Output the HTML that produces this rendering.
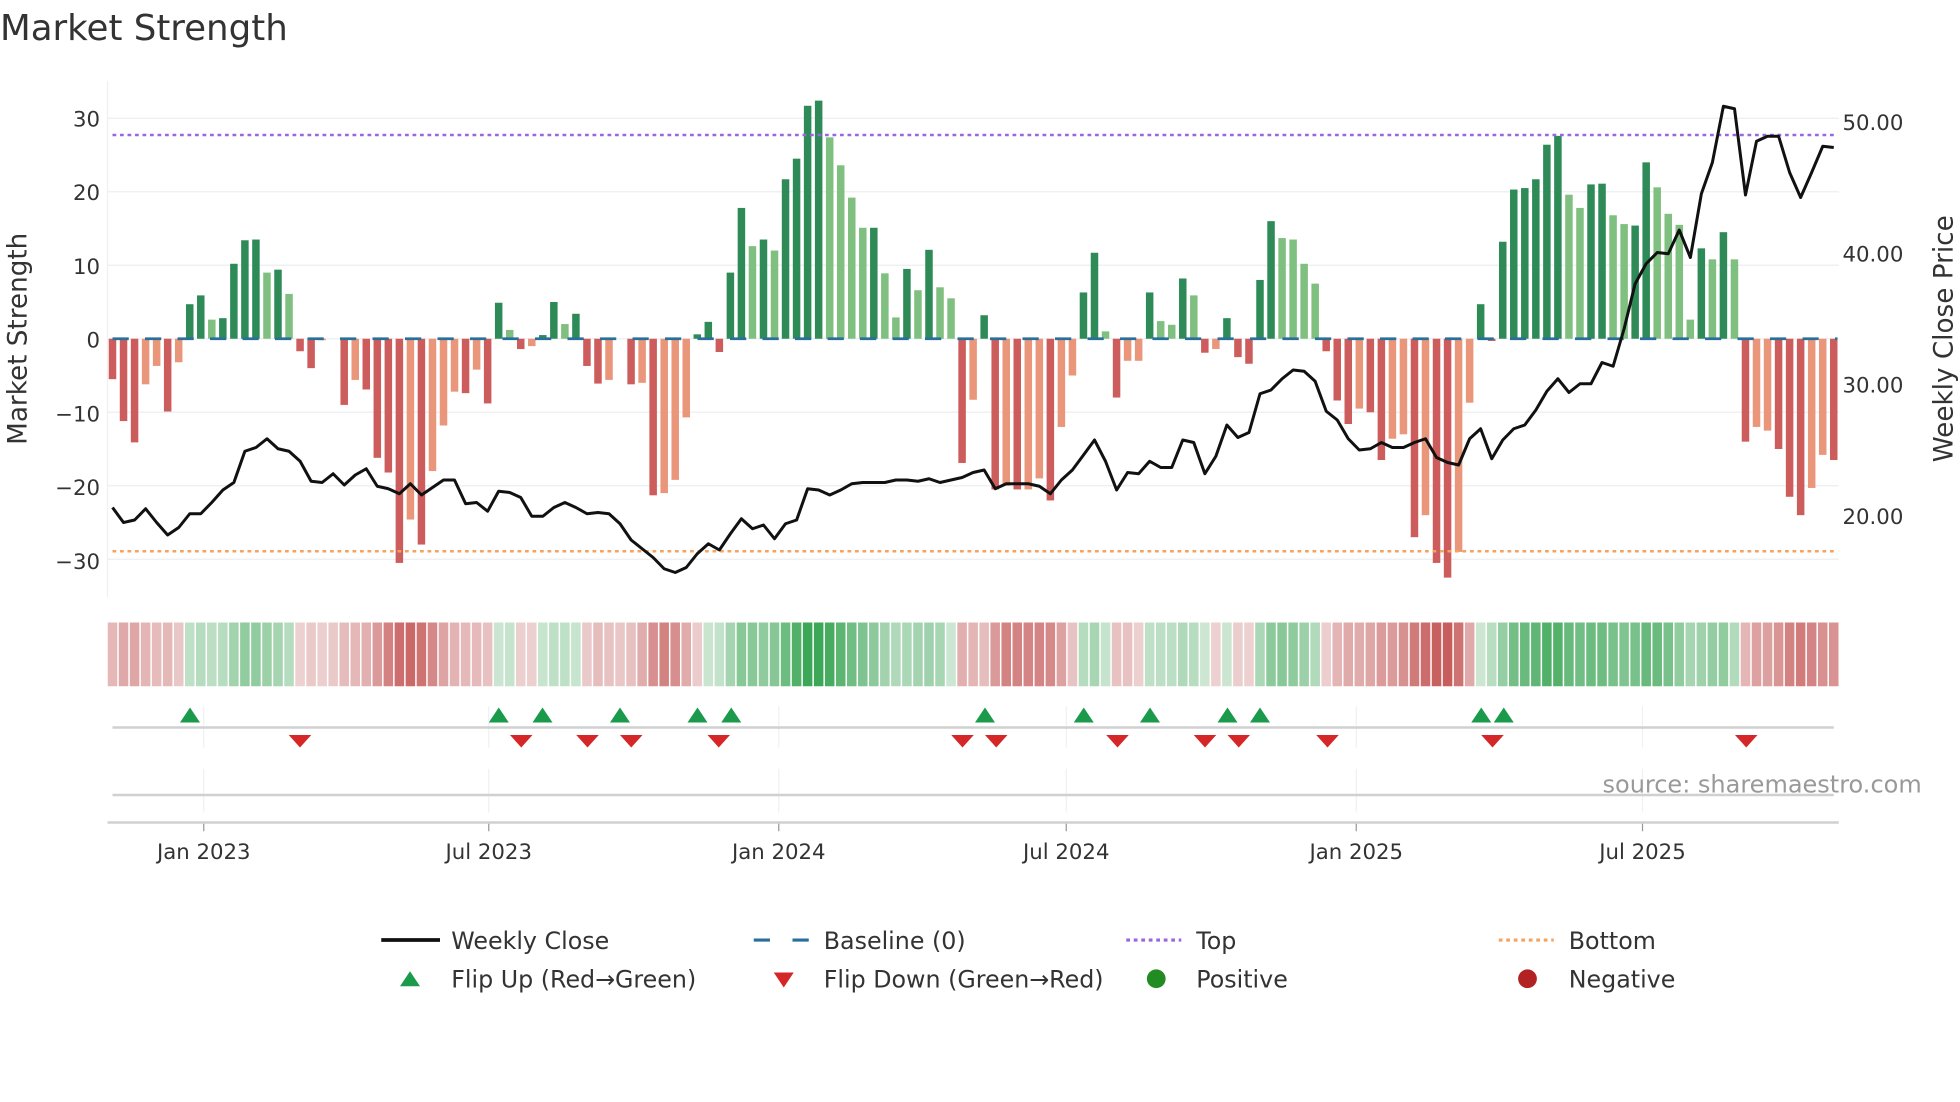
<!DOCTYPE html>
<html><head><meta charset="utf-8"><style>
html,body{margin:0;padding:0;background:#fff;width:1960px;height:1102px;overflow:hidden}
svg text{font-family:"DejaVu Sans","Liberation Sans",sans-serif}
</style></head><body>
<svg id="s" width="1960" height="1102" viewBox="0 0 1568 881.6" xmlns="http://www.w3.org/2000/svg">
<rect width="1568" height="881.6" fill="#fff"/>
<text x="0" y="32" font-size="28.5" fill="#333">Market Strength</text>
<g id="grid"></g>
<line x1="86" y1="65" x2="86" y2="478" stroke="#eef0f4" stroke-width="1"/>
<g id="bars"></g>
<line x1="90" y1="108" x2="1470" y2="108" stroke="#9966dd" stroke-width="2" stroke-dasharray="3,3"/>
<line x1="90" y1="441" x2="1470" y2="441" stroke="#f4a460" stroke-width="2" stroke-dasharray="3,3"/>
<polyline id="price" fill="none" stroke="#111" stroke-width="2.4" stroke-linejoin="round"/>
<text transform="translate(21,271) rotate(-90)" text-anchor="middle" font-size="21" fill="#333">Market Strength</text>
<text transform="translate(1562,271) rotate(-90)" text-anchor="middle" font-size="21" fill="#333">Weekly Close Price</text>
<g font-size="17" fill="#333" text-anchor="end">
<text x="80" y="101">30</text><text x="80" y="160">20</text><text x="80" y="219">10</text><text x="80" y="278">0</text>
<text x="80" y="337">−10</text><text x="80" y="396">−20</text><text x="80" y="455">−30</text>
</g>
<g font-size="17" fill="#333">
<text x="1474" y="104">50.00</text><text x="1474" y="209">40.00</text><text x="1474" y="314">30.00</text><text x="1474" y="419">20.00</text>
</g>
<g id="heat"></g>
<g stroke="#eef0f4" stroke-width="1">
<line x1="163" y1="565" x2="163" y2="598"/><line x1="391" y1="565" x2="391" y2="598"/><line x1="623" y1="565" x2="623" y2="598"/><line x1="853" y1="565" x2="853" y2="598"/><line x1="1085" y1="565" x2="1085" y2="598"/><line x1="1314" y1="565" x2="1314" y2="598"/>
<line x1="163" y1="615" x2="163" y2="650"/><line x1="391" y1="615" x2="391" y2="650"/><line x1="623" y1="615" x2="623" y2="650"/><line x1="853" y1="615" x2="853" y2="650"/><line x1="1085" y1="615" x2="1085" y2="650"/><line x1="1314" y1="615" x2="1314" y2="650"/>
</g>
<line x1="90" y1="582" x2="1467" y2="582" stroke="#d0d0d0" stroke-width="2"/>
<line x1="90" y1="636" x2="1467" y2="636" stroke="#d0d0d0" stroke-width="2"/>
<line x1="86" y1="658" x2="1471" y2="658" stroke="#d0d0d0" stroke-width="2"/>
<g id="flips"></g>
<text x="1282" y="634" font-size="19.2" fill="#999">source: sharemaestro.com</text>
<g stroke="#999" stroke-width="1">
<line x1="163" y1="659" x2="163" y2="665"/><line x1="391" y1="659" x2="391" y2="665"/><line x1="623" y1="659" x2="623" y2="665"/><line x1="853" y1="659" x2="853" y2="665"/><line x1="1085" y1="659" x2="1085" y2="665"/><line x1="1314" y1="659" x2="1314" y2="665"/>
</g>
<g font-size="17" fill="#333" text-anchor="middle">
<text x="163" y="687">Jan 2023</text><text x="391" y="687">Jul 2023</text><text x="623" y="687">Jan 2024</text><text x="853" y="687">Jul 2024</text><text x="1085" y="687">Jan 2025</text><text x="1314" y="687">Jul 2025</text>
</g>
<g font-size="19" fill="#333">
<line x1="305" y1="752" x2="352" y2="752" stroke="#111" stroke-width="3"/><text x="361" y="759">Weekly Close</text>
<line x1="603" y1="752" x2="647" y2="752" stroke="#2a6f9a" stroke-width="2.5" stroke-dasharray="13,18"/><text x="659" y="759">Baseline (0)</text>
<line x1="901" y1="752" x2="945" y2="752" stroke="#9966dd" stroke-width="2.5" stroke-dasharray="3,3"/><text x="957" y="759">Top</text>
<line x1="1199" y1="752" x2="1243" y2="752" stroke="#f4a460" stroke-width="2.5" stroke-dasharray="3,3"/><text x="1255" y="759">Bottom</text>
<polygon points="320,789 328,777 336,789" fill="#1a9a4a"/><text x="361" y="790">Flip Up (Red→Green)</text>
<polygon points="619,778 635,778 627,790" fill="#d62728"/><text x="659" y="790">Flip Down (Green→Red)</text>
<circle cx="925" cy="783" r="7.5" fill="#228b22"/><text x="957" y="790">Positive</text>
<circle cx="1222" cy="783" r="7.5" fill="#b22222"/><text x="1255" y="790">Negative</text>
</g>
</svg>
<script>
(function(){
var NS="http://www.w3.org/2000/svg";
function el(p,t,a){var e=document.createElementNS(NS,t);for(var k in a)e.setAttribute(k,a[k]);p.appendChild(e);return e;}
var B="-5.5R -11.2R -14.1R -6.2S -3.7S -9.9R -3.2S 4.7D 5.9D 2.6L 2.8D 10.2D 13.4D 13.5D 9L 9.4D 6.1L -1.7R -4R -0.2S 0Z -9R -5.6S -6.9R -16.2R -18.2R -30.5R -24.6S -28R -18S -11.8S -7.2S -7.4R -4.2S -8.8R 4.9D 1.2L -1.4R -1S 0.5D 5D 2L 3.4D -3.7R -6.1R -5.6S 0Z -6.2R -6S -21.3R -21S -19.2S -10.7S 0.6D 2.3D -1.8R 9D 17.8D 12.6L 13.5D 12L 21.7D 24.5D 31.7D 32.4D 27.4L 23.6L 19.2L 15.1L 15.1D 8.9L 2.9L 9.5D 6.6L 12.1D 7L 5.5L -16.9R -8.3S 3.2D -20.5R -20S -20.5R -20.5S -19S -22R -12S -5S 6.3D 11.7D 1L -8R -3S -3S 6.3D 2.4L 1.9L 8.2D 5.9L -1.9R -1.4S 2.8D -2.5R -3.4R 8D 16D 13.7L 13.5L 10.2L 7.5L -1.7R -8.4R -11.6R -9.5S -10R -16.5R -13.6S -13S -27R -24S -30.5R -32.5R -29S -8.7S 4.7D -0.3R 13.2D 20.3D 20.5D 21.7D 26.4D 27.6D 19.6L 17.8L 21D 21.1D 16.8L 15.6L 15.4D 24D 20.6L 17L 15.5L 2.6L 12.3D 10.8L 14.5D 10.8L -14R -12S -12.5S -15R -21.5R -24R -20.3S -15.8S -16.5R".split(" ");
var P=[406,418,416,407,418,428,422,411,411,402,392,386,361,358,351,359,361,369,385,386,379,388,380,375,389,391,395,387,396,390,384,384,403,402,409,393,394,398,413,413,406,402,406,411,410,411,419,432,439,446,455,458,454,443,435,440,427,415,423,420,431,419,416,391,392,396,392,387,386,386,386,384,384,385,383,386,384,382,378,376,391,387,387,387,389,395,384,376,364,352,369,392,378,379,369,374,374,352,354,379,365,340,350,346,315,312,303,296,297,305,329,336,351,360,359,354,358,358,354,351,366,370,372,351,343,367,352,343,340,328,313,303,314,307,307,290,293,263,227,211,202,203,184,206,155,130,85,87,156,113,109,109,138,158,138,117,118];
var step=(1467-90)/156, x0=90, z=271, u=5.88;
var col={D:"#2e8b57",L:"#7fbf7f",R:"#cd5c5c",S:"#e9967a",Z:"#e9967a"};
var g=document.getElementById("grid");
[30,20,10,0,-10,-20,-30].forEach(function(v){el(g,"line",{x1:86,x2:1471,y1:z-v*u,y2:z-v*u,stroke:"#eef0f4","stroke-width":1.2});});
var bg=document.getElementById("bars"), hg=document.getElementById("heat");
var vals=[];
B.forEach(function(s,i){var t=s.slice(-1),v=parseFloat(s);vals.push(v);
 var x=x0+i*step, h=Math.abs(v)*u;
 if(h>0.3) el(bg,"rect",{x:x-3,y:v>0?z-h:z,width:6,height:h,fill:col[t]});
});
el(bg,"line",{x1:90,x2:1470,y1:z,y2:z,stroke:"#2a6f9a","stroke-width":2.2,"stroke-dasharray":"13,13"});
function mix(a,b,t){return "rgb("+[0,1,2].map(function(k){return Math.round(a[k]+(b[k]-a[k])*t)}).join(",")+")";}
var W=[250,250,250],G=[44,160,72],R=[192,70,70];
for(var i=0;i<vals.length;i++){
 var a=vals[Math.max(0,i-1)],b=vals[i],c=vals[Math.min(vals.length-1,i+1)];
 var m=(a+2*b+c)/4; var t=Math.min(Math.abs(m)/30,1);
 var cc=m>=0?mix(W,G,0.22+0.7*t):mix(W,R,0.22+0.65*t);
 el(hg,"rect",{x:x0+i*step-step/2+0.6,y:498,width:step-1.2,height:51,fill:cc});
}
document.getElementById("price").setAttribute("points",P.map(function(y,i){return (x0+i*step).toFixed(1)+","+y}).join(" "));
var fg=document.getElementById("flips");
[152,399,434,496,558,585,788,867,920,982,1008,1185,1203].forEach(function(x){el(fg,"polygon",{points:(x-8)+",578 "+x+",566 "+(x+8)+",578",fill:"#1a9a4a"});});
[240,417,470,505,575,770,797,894,964,991,1062,1194,1397].forEach(function(x){el(fg,"polygon",{points:(x-9)+",588 "+(x+9)+",588 "+x+",598",fill:"#d62728"});});
})();
</script>
</body></html>
